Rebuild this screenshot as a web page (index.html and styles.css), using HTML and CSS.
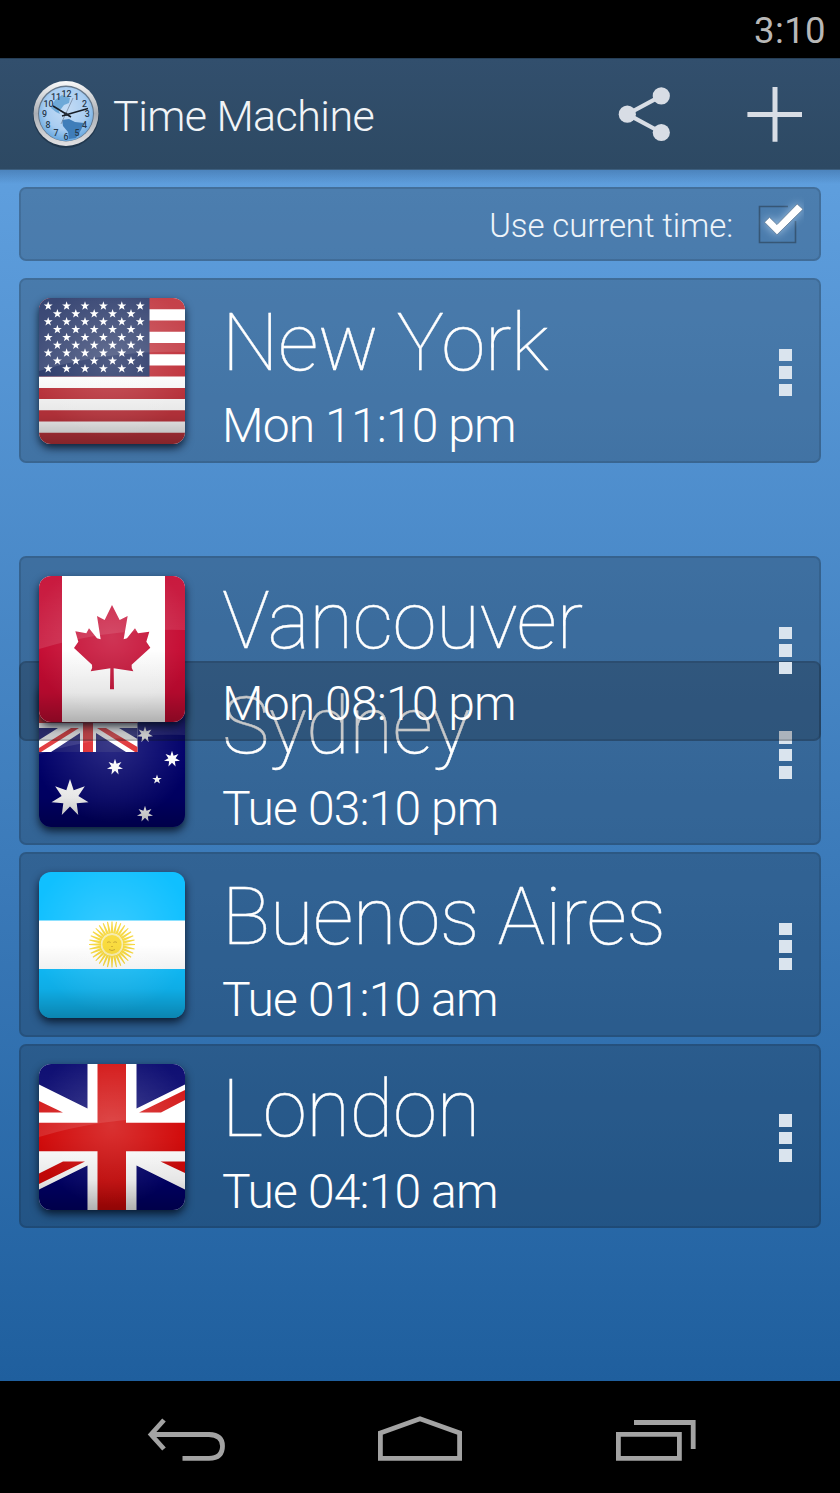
FILE: index.html
```
<!DOCTYPE html>
<html lang="en">
<head>
<meta charset="utf-8">
<title>Time Machine</title>
<link rel="stylesheet" href="styles.css">
</head>
<body>
<svg class="defs" width="0" height="0" aria-hidden="true">
  <defs>
    <polygon id="star5" points="0,-1 .235,-.324 .951,-.309 .38,.124 .588,.809 0,.4 -.588,.809 -.38,.124 -.951,-.309 -.235,-.324"/>
    <polygon id="star7" points="0,-1 .195,-.405 .782,-.623 .439,-.1 .975,.223 .352,.281 .434,.901 0,.45 -.434,.901 -.352,.281 -.975,.223 -.439,-.1 -.782,-.623 -.195,-.405"/>
    <g id="s"><use href="#star5" transform="scale(4.7)"/></g>
    <g id="row5"><use href="#s" x="18.4"/><use href="#s" x="36.8"/><use href="#s" x="55.2"/><use href="#s" x="73.6"/><use href="#s" x="92"/></g>
    <g id="row6"><use href="#s" x="9.2"/><use href="#s" x="27.6"/><use href="#s" x="46"/><use href="#s" x="64.4"/><use href="#s" x="82.8"/><use href="#s" x="101.2"/></g>
    <g id="rays4"><path id="ray" d="M-1.3-11L-.5-23H.5L1.3-11z"/><use href="#ray" transform="rotate(11.25)"/><use href="#ray" transform="rotate(22.5)"/><use href="#ray" transform="rotate(33.75)"/></g>
    <linearGradient id="shade" x1="0" y1="0" x2="0" y2="1"><stop offset=".5" stop-color="#000" stop-opacity="0"/><stop offset=".8" stop-color="#000" stop-opacity=".1"/><stop offset="1" stop-color="#000" stop-opacity=".31"/></linearGradient>
    <radialGradient id="glow" cx=".5" cy=".42" r=".55"><stop offset="0" stop-color="#fff" stop-opacity=".17"/><stop offset="1" stop-color="#fff" stop-opacity="0"/></radialGradient>
    <linearGradient id="gloss" x1="0" y1="0" x2="0" y2="1"><stop offset="0" stop-color="#fff" stop-opacity=".06"/><stop offset="1" stop-color="#fff" stop-opacity=".12"/></linearGradient>
    <g id="finish"><rect width="146" height="146" fill="url(#shade)"/><rect width="146" height="146" fill="url(#glow)"/><path d="M0 0H146V54Q70 52 0 73z" fill="url(#gloss)"/></g>
    <radialGradient id="face" cx=".5" cy=".4" r=".6"><stop offset="0" stop-color="#c5dcf5"/><stop offset=".65" stop-color="#a9cdf1"/><stop offset="1" stop-color="#66a7df"/></radialGradient>
    <linearGradient id="rim" x1="0" y1="0" x2="0" y2="1"><stop offset="0" stop-color="#fafafa"/><stop offset=".5" stop-color="#aaaeb4"/><stop offset="1" stop-color="#e2e2e4"/></linearGradient>
  </defs>
</svg>

<div class="status"><span>3:10</span></div>

<header class="bar">
  <svg class="logo" width="70" height="72" viewBox="0 0 70 72">
    <circle cx="35" cy="37" r="33" fill="#16283a" opacity=".55"/>
    <circle cx="35" cy="35.5" r="32.5" fill="url(#rim)"/>
    <circle cx="35" cy="35.5" r="28" fill="#66788b"/>
    <circle cx="35" cy="36" r="27" fill="url(#face)"/>
    <path d="M24 22L31 17 39 20 38 25 33 27 30 31 27 31 29 36 25 34 20 30z" fill="#6ea9d8"/>
    <path d="M31 42L38 41 44 44 53 45 50 52 45 60 38 61 37 54 32 48z" fill="#3f7db9"/>
    <g class="numerals"><text x="35.5" y="18.8">12</text><text x="45.5" y="22">1</text><text x="53.5" y="29">2</text><text x="56.3" y="39">3</text><text x="53.5" y="50">4</text><text x="46" y="57.5">5</text><text x="35" y="61.5">6</text><text x="25" y="57.5">7</text><text x="17" y="50">8</text><text x="13.5" y="39">9</text><text x="17.500" y="29">10</text><text x="25" y="22">11</text></g>
    <path d="M30 46L42 20" stroke="#7889a0" stroke-width=".8"/>
    <path d="M40 39L22 28M31 38L57 30.5" stroke="#171d26" stroke-width="1.5" fill="none"/>
    <circle cx="35" cy="36.2" r="1.7" fill="#222b36"/>
  </svg>
  <h1>Time Machine</h1>
  <svg class="share" width="54" height="56" viewBox="0 0 54 56"><path d="M43.3 9.9L9.3 28.2 43.3 46.5" fill="none" stroke="#d8dde5" stroke-width="4.2"/><g fill="#d8dde5"><circle cx="43.3" cy="9.9" r="8.6"/><circle cx="9.3" cy="28.2" r="8.6"/><circle cx="43.3" cy="46.5" r="8.6"/></g></svg>
  <svg class="add" width="56" height="56" viewBox="0 0 56 56"><path d="M28 .9V55.7M.4 28.4H55" stroke="#d8dde5" stroke-width="5"/></svg>
</header>

<main class="content">
  <label class="card toggle">
    <span>Use current time:</span>
    <svg width="50" height="50" viewBox="0 0 50 50"><path d="M34 10.5H5.5V46.500H41.5V25" fill="none" stroke="#365675" stroke-width="1.6"/><path class="tick" d="M10.5 26.200L15.5 21.300 23 28.600 43.2 8 49 13.300 23 38.800z"/></svg>
  </label>

  <section class="card city lead">
    <svg class="flag" viewBox="0 0 146 146">
      <rect width="146" height="146" fill="#fff"/>
      <path d="M0 5.6H146M0 28.1H146M0 50.6H146M0 73H146M0 95.5H146M0 117.9H146M0 140.4H146" stroke="#c1353e" stroke-width="11.23"/>
      <rect width="110.5" height="78.5" fill="#2c3b6b"/>
      <g fill="#fff"><use href="#row6" y="8"/><use href="#row5" y="15.8"/><use href="#row6" y="23.7"/><use href="#row5" y="31.5"/><use href="#row6" y="39.4"/><use href="#row5" y="47.2"/><use href="#row6" y="55"/><use href="#row5" y="62.9"/><use href="#row6" y="70.7"/></g>
      <use href="#finish"/>
    </svg>
    <div class="info"><h2>New York</h2><p>Mon 11:10 pm</p></div>
    <div class="menu"><i></i><i></i><i></i></div>
  </section>

  <section class="card city dragged">
    <svg class="flag" viewBox="0 0 146 146">
      <rect width="146" height="146" fill="#fff"/>
      <path d="M0 0H23V146H0zM126 0H146V146H126z" fill="#c50b32"/>
      <path transform="scale(.3333) translate(-58 -50)" fill="#c50b32" d="M277 137L255 182 232 170 243 240 232 237 208 207 200 222 167 216 176 247 163 266 217 316Q220 325 213 336L272 327 271 390H283L282 327 341 336Q334 325 336 316L392 265 380 247 389 217 355 222 346 207 322 237 312 240 324 170 300 182z"/>
      <use href="#finish"/>
    </svg>
    <div class="info"><h2>Vancouver</h2><p>Mon 08:10 pm</p></div>
    <div class="menu"><i></i><i></i><i></i></div>
  </section>

  <section class="card city under">
    <svg class="flag" viewBox="0 0 146 146">
      <rect width="146" height="146" fill="#00006a"/>
      <path d="M0 0H98.5V71H0z" fill="#fff"/>
      <path d="M0 47H19L0 59zM12 71L41 52V71zM57 52V71H87zM80 47H98.5V58z" fill="#12126f"/>
      <path d="M0 29H98.5V42H0zM44 0H54V71H44zM2 71L40 47H32L0 67V71zM67 47L98.5 66V71H96L58 47z" fill="#dd2024"/>
      <g fill="#fff"><use href="#star7" transform="translate(31 117) scale(19)"/><use href="#star7" transform="translate(76 86) scale(8.2)"/><use href="#star7" transform="translate(133 78) scale(8.2)"/><use href="#star7" transform="translate(106 53.5) scale(8.2)"/><use href="#star7" transform="translate(106 133) scale(8.2)"/><use href="#star5" transform="translate(118 98.5) scale(5)"/></g>
      <use href="#finish"/>
    </svg>
    <div class="info"><h2>Sydney</h2><p>Tue 03:10 pm</p></div>
    <div class="menu"><i></i><i></i><i></i></div>
  </section>

  <section class="card city">
    <svg class="flag" viewBox="0 0 146 146">
      <rect width="146" height="146" fill="#10c0ff"/>
      <rect y="48.5" width="146" height="48.5" fill="#fff"/>
      <g transform="translate(73 72.5)"><g fill="#f5d328"><use href="#rays4"/><use href="#rays4" transform="rotate(45)"/><use href="#rays4" transform="rotate(90)"/><use href="#rays4" transform="rotate(135)"/><use href="#rays4" transform="rotate(180)"/><use href="#rays4" transform="rotate(225)"/><use href="#rays4" transform="rotate(270)"/><use href="#rays4" transform="rotate(315)"/></g><circle r="10.3" fill="#f8d51f" stroke="#f4e8a0" stroke-width="1.4"/><path d="M-5-2Q-3-3.5-1.3-2M1.3-2Q3-3.5 5-2M-.8 2H.8M-3 5Q0 7 3 5" fill="none" stroke="#c39b12" stroke-width="1"/></g>
      <rect width="146" height="146" fill="url(#shade)"/><rect width="146" height="146" fill="url(#glow)"/>
    </svg>
    <div class="info"><h2>Buenos Aires</h2><p>Tue 01:10 am</p></div>
    <div class="menu"><i></i><i></i><i></i></div>
  </section>

  <section class="card city">
    <svg class="flag" viewBox="0 0 146 146">
      <rect width="146" height="146" fill="#fff"/>
      <path d="M0 0H48.5V44.5L0 20.5zM97.5 0H146V20.5L97.5 44.5zM0 125.5L48.5 101.5V146H0zM97.5 101.5L146 125.5V146H97.5z" fill="#00006a"/>
      <path d="M58.5 0H87V58.7H146V87.3H87V146H58.5V87.3H0V58.7H58.5zM0 37L24 48.5H0zM100 48.5L146 26V36L122 48.5zM0 109.5L24 97.5H46L0 120zM121.5 97.5H146V109z" fill="#d10808"/>
      <use href="#finish"/>
    </svg>
    <div class="info"><h2>London</h2><p>Tue 04:10 am</p></div>
    <div class="menu"><i></i><i></i><i></i></div>
  </section>
</main>

<nav class="nav">
  <svg width="80" height="50" viewBox="0 0 80 50"><path d="M17 5L4 19.5 17 34"/><path d="M5 19.5H62Q75.5 20 75.5 31 75.5 43.3 62 43.3H35.5"/></svg>
  <svg width="86" height="50" viewBox="0 0 86 50"><path d="M2.4 17.9L42 3.7 81.6 17.9V43.4H2.4z"/></svg>
  <svg width="82" height="50" viewBox="0 0 82 50"><path d="M3.4 19.4H64.4V43.4H3.4zM19 7.5H78.2V34"/></svg>
</nav>
</body>
</html>
```
FILE: styles.css
```
* { box-sizing: border-box; }
body {
  margin: 0;
  width: 840px;
  height: 1493px;
  display: flex;
  flex-direction: column;
  overflow: hidden;
  background: #000;
  color: #fff;
  font-family: Roboto, sans-serif;
}
svg { display: block; flex: none; }
.defs { position: absolute; }
h1, h2, p { margin: 0; }

.status {
  height: 58px;
  padding: 10px 14px 0 0;
  text-align: right;
  color: #b8b8b8;
  font-size: 36.5px;
  line-height: 42px;
  letter-spacing: .4px;
}

.bar {
  height: 112px;
  display: flex;
  align-items: center;
  padding: 0 37px 0 31px;
  background: linear-gradient(#324f6d, #2d4963);
  border-top: 1px solid #263e56;
  border-bottom: 1px solid #3c5e7e;
}
.bar h1 {
  flex: 1;
  margin-left: 12px;
  padding-top: 4px;
  font-size: 43px;
  line-height: 50px;
  font-weight: 300;
  letter-spacing: -.55px;
  color: #f1f4f7;
}
.share { margin-right: 75px; }
.numerals { font: 500 8.8px Roboto, sans-serif; text-anchor: middle; fill: #26394d; }

.content {
  height: 1211px;
  padding: 17px 19px 0;
  background: linear-gradient(rgba(20, 50, 90, .25), rgba(20, 50, 90, 0) 14px), linear-gradient(#5f9fde, #3b7ab9 58%, #1f5f9e);
}
.card {
  display: flex;
  border: 2px solid rgba(15, 20, 25, .34);
  border-radius: 7px;
  background: rgba(20, 24, 28, .24);
  background-clip: padding-box;
}
.toggle {
  height: 74px;
  align-items: center;
  justify-content: flex-end;
  padding-right: 15px;
  font-size: 33px;
  font-weight: 300;
  letter-spacing: -.12px;
  color: #eef4fa;
}
.toggle span { padding-top: 2px; }
.toggle svg { margin: -6px 0 0 21px; }
.tick {
  fill: #fff;
  stroke: #506b86;
  stroke-width: .7;
  filter: drop-shadow(0 0 5px rgba(205, 230, 255, .65));
}

.city {
  height: 184.5px;
  margin-top: 7px;
  padding: 18px 27.5px 0 18px;
}
.lead { margin-top: 17px; }
.dragged { position: relative; z-index: 2; margin-top: 93.5px; }
.under { margin-top: -80px; }
.flag {
  width: 146px;
  height: 146px;
  border-radius: 12px;
  overflow: hidden;
  box-shadow: 0 4px 9px rgba(0, 10, 25, .8);
}
.info { flex: 1; margin: 5px 0 0 37px; white-space: nowrap; }
.info h2 { font-size: 80px; line-height: 80px; font-weight: 100; letter-spacing: -.5px; -webkit-text-stroke: .4px #fff; }
.info p { margin-top: 15px; font-size: 48px; line-height: 56px; font-weight: 300; letter-spacing: -.85px; }
.menu { display: flex; flex-direction: column; gap: 5px; padding-top: 50.5px; }
.menu i { width: 12.5px; height: 12.5px; background: #dae4ee; }

.nav {
  height: 112px;
  display: flex;
  gap: 151px;
  align-items: flex-start;
  padding: 34px 0 0 147px;
}
.nav path { fill: none; stroke: #a3a3a3; stroke-width: 4.8; }
```
